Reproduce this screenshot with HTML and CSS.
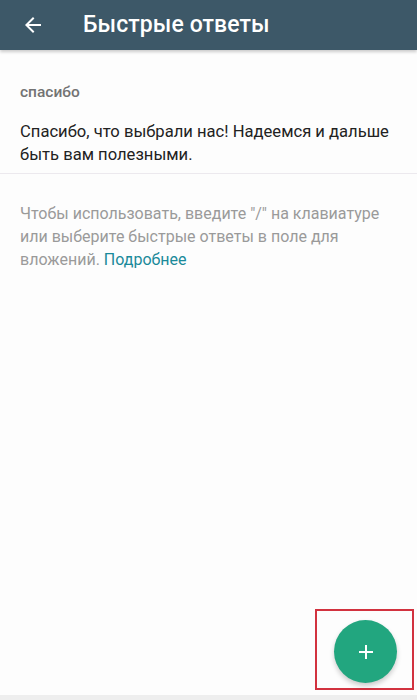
FILE: index.html
```html
<!DOCTYPE html>
<html lang="ru">
<head>
<meta charset="utf-8">
<link rel="stylesheet" href="styles.css">
</head>
<body>
<div class="screen">
  <header class="appbar">
    <svg class="back" width="24" height="24" viewBox="0 0 24 24"><path d="M20 11H7.83l5.59-5.59L12 4l-8 8 8 8 1.41-1.41L7.83 13H20v-2z" fill="#fff"/></svg>
    <h1 class="title">Быстрые ответы</h1>
  </header>
  <section class="reply">
    <div class="shortcut">спасибо</div>
    <div class="message">Спасибо, что выбрали нас! Надеемся и дальше быть вам полезными.</div>
  </section>
  <p class="hint">Чтобы использовать, введите "/" на клавиатуре или выберите быстрые ответы в поле для вложений. <a class="link">Подробнее</a></p>
  <div class="mark"></div>
  <button class="fab"><svg width="24" height="24" viewBox="0 0 24 24"><path d="M19 13h-6v6h-2v-6H5v-2h6V5h2v6h6v2z" fill="#fff"/></svg></button>
  <div class="bottom"></div>
</div>
</body>
</html>
```
FILE: styles.css
```css
html, body { margin: 0; padding: 0; }
body { font-family: Roboto, "Noto Sans", sans-serif; background: #fff; }
.screen { position: relative; width: 417px; height: 700px; overflow: hidden; background: #fdfdfd; }
.appbar {
  height: 50px; background: #3d5868; display: flex; align-items: center;
  box-shadow: 0 2px 3px rgba(0,0,0,0.2); position: relative; z-index: 1;
}
.back { margin-left: 21px; width: 24px; height: 24px; }
.title { margin: 0 0 2px 38px; color: #fff; font-size: 23px; font-weight: 500; letter-spacing: 0.1px; }
.reply { padding: 32px 20px 7px; border-bottom: 1px solid #ece9ee; }
.shortcut { color: #737373; font-size: 15.5px; font-weight: 500; line-height: 20px; }
.message { margin-top: 18px; color: #222; font-size: 16.6px; line-height: 23px; }
.hint { margin: 28px 20px 0; color: #9a9a9a; font-size: 16px; line-height: 23px; }
.link { color: #1a8a9a; }
.fab {
  position: absolute; left: 334px; top: 620px; width: 63px; height: 63px; border-radius: 50%;
  border: none; background: #22a67f; display: flex; align-items: center; justify-content: center;
  box-shadow: 0 3px 5px rgba(0,0,0,0.2); padding: 0;
}
.mark { position: absolute; left: 315px; top: 609px; width: 95px; height: 77px; border: 2px solid #d2323f; }
.bottom { position: absolute; left: 0; right: 0; top: 695px; height: 5px; background: #eeeeee; }
```
